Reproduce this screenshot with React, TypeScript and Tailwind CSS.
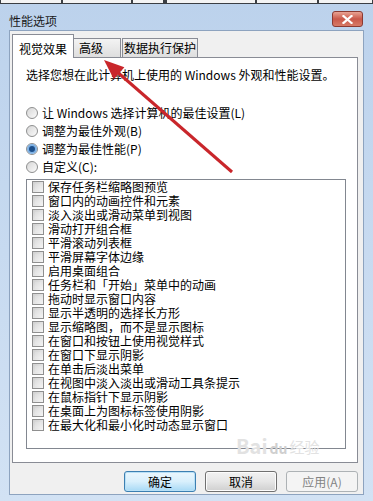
import React from "react";

const ITEMS = [
  "保存任务栏缩略图预览",
  "窗口内的动画控件和元素",
  "淡入淡出或滑动菜单到视图",
  "滑动打开组合框",
  "平滑滚动列表框",
  "平滑屏幕字体边缘",
  "启用桌面组合",
  "任务栏和「开始」菜单中的动画",
  "拖动时显示窗口内容",
  "显示半透明的选择长方形",
  "显示缩略图，而不是显示图标",
  "在窗口和按钮上使用视觉样式",
  "在窗口下显示阴影",
  "在单击后淡出菜单",
  "在视图中淡入淡出或滑动工具条提示",
  "在鼠标指针下显示阴影",
  "在桌面上为图标标签使用阴影",
  "在最大化和最小化时动态显示窗口",
];

const RADIOS = [
  { label: "让 Windows 选择计算机的最佳设置(L)", on: false },
  { label: "调整为最佳外观(B)", on: false },
  { label: "调整为最佳性能(P)", on: true },
  { label: "自定义(C):", on: false },
];

function Radio({ on }: { on: boolean }) {
  return (
    <span className="w-[12px] h-[12px] rounded-full border border-[#8e8f8f] bg-linear-to-br from-[#d6d6d6] to-[#fbfbfb] flex items-center justify-center shrink-0">
      {on && <span className="w-[6px] h-[6px] rounded-full bg-[#1d4f8a] ring-2 ring-[#7fb2e5]" />}
    </span>
  );
}

function Check() {
  return (
    <span className="w-[12px] h-[12px] border border-[#8f8f8f] bg-linear-to-br from-[#cfcfcf] to-[#f6f6f6] shrink-0 p-[2px]">
      <span className="block w-full h-full bg-linear-to-br from-[#dcdcdc] to-[#f0f0f0]" />
    </span>
  );
}

export default function App() {
  return (
    <div
      className="w-[373px] h-[501px] relative overflow-hidden bg-linear-to-b from-[#bcd2ec] to-[#d2e2f4] text-black"
      style={{ fontFamily: '"Noto Sans CJK SC", "Liberation Sans", sans-serif' }}
    >
      {/* strip of the window behind */}
      <div className="h-[4px] bg-[#3b3f44] flex gap-[2px] px-[1px]">
        <div className="w-[60px] h-[3px] bg-[#f4f4f4]" />
        <div className="w-[68px] h-[3px] bg-[#f4f4f4]" />
        <div className="w-[30px] h-[3px] bg-[#f4f4f4]" />
        <div className="w-[88px] h-[3px] bg-[#f4f4f4] ml-[2px]" />
        <div className="w-[60px] h-[3px] bg-[#f4f4f4]" />
        <div className="flex-1 h-[3px] bg-[#f4f4f4]" />
      </div>

      {/* Title bar */}
      <div className="h-[26px] flex items-start justify-between pl-[9px] pr-[10px]">
        <span className="text-[12px] leading-[14px] mt-[10px] text-[#1a1a1a]">性能选项</span>
        <div className="mt-[7px] w-[31px] h-[16px] rounded-[3px] border border-[#8b3a32] bg-linear-to-b from-[#e8a394] via-[#c9584a] to-[#d77a66] flex items-center justify-center">
          <svg width="11" height="9" viewBox="0 0 11 9">
            <path d="M1.5 1 L9.5 8 M9.5 1 L1.5 8" stroke="#fff" strokeWidth="2.2" strokeLinecap="square" />
          </svg>
        </div>
      </div>

      {/* Client area */}
      <div className="ml-[9px] w-[355px] h-[465px] border border-[#8da3bf] bg-[#f0f0f0] text-[12px] leading-[14px]">
        <div className="pt-[3px] pl-[2px]">
          {/* Tabs */}
          <div className="h-[23px] flex items-start relative z-10">
            <div className="w-[62px] h-[24px] bg-white border border-b-0 border-[#898c95] flex items-center justify-center pt-[4px]">
              视觉效果
            </div>
            <div className="w-[47px] h-[19px] mt-[4px] bg-linear-to-b from-[#f3f3f3] to-[#dedede] border-t border-r border-[#898c95] flex items-center justify-center pr-[12px]">
              高级
            </div>
            <div className="w-[76px] h-[19px] mt-[4px] ml-[1px] bg-linear-to-b from-[#f3f3f3] to-[#dedede] border border-b-0 border-[#898c95] flex items-center justify-center">
              数据执行保护
            </div>
          </div>

          {/* Panel */}
          <div className="w-[346px] h-[406px] bg-white border border-[#898c95] pt-[10px] pl-[13px]">
            <p className="h-[14px] whitespace-nowrap">选择您想在此计算机上使用的 Windows 外观和性能设置。</p>

            <div className="mt-[22px]">
              {RADIOS.map(r => (
                <div key={r.label} className="h-[18px] flex items-center gap-[4px] whitespace-nowrap">
                  <Radio on={r.on} />
                  <span>{r.label}</span>
                </div>
              ))}
            </div>

            <div className="mt-[3px] w-[320px] h-[270px] border border-[#828790] pl-[5px]">
              {ITEMS.map(t => (
                <div key={t} className="h-[14px] flex items-center gap-[4px] whitespace-nowrap">
                  <Check />
                  <span>{t}</span>
                </div>
              ))}
            </div>
          </div>

          {/* Buttons */}
          <div className="mt-[8px] ml-[112px] flex gap-[9px]">
            <button className="w-[72px] h-[21px] rounded-[3px] border border-[#3c7fb1] bg-linear-to-b from-[#eaf6fd] via-[#d9f0fc] to-[#a7d9f5] shadow-[inset_0_0_0_1px_#b8e0f6]">
              确定
            </button>
            <button className="w-[72px] h-[21px] rounded-[3px] border border-[#707070] bg-linear-to-b from-[#f2f2f2] via-[#e6e6e6] to-[#cfcfcf] shadow-[inset_0_0_0_1px_#fcfcfc]">
              取消
            </button>
            <button className="w-[72px] h-[21px] rounded-[3px] border border-[#adb2b5] bg-[#f4f4f4] text-[#838383]">
              应用(A)
            </button>
          </div>
        </div>
      </div>

      {/* watermark */}
      <div className="absolute left-[236px] top-[436px] flex items-end gap-[2px] text-[#e2e2e2] pointer-events-none">
        <span className="text-[20px] leading-[20px] font-bold">Bai</span>
        <span className="text-[14px] leading-[16px] font-bold text-[#cfcfcf]">du</span>
        <span className="text-[15px] leading-[18px]">经验</span>
      </div>

      {/* red arrow */}
      <svg className="absolute left-0 top-0 pointer-events-none" width="373" height="501">
        <line x1="232" y1="172" x2="115" y2="70" stroke="#c9262b" strokeWidth="3" />
        <polygon points="104,60 113.8,79.2 124.4,67.2" fill="#c9262b" />
      </svg>
    </div>
  );
}
